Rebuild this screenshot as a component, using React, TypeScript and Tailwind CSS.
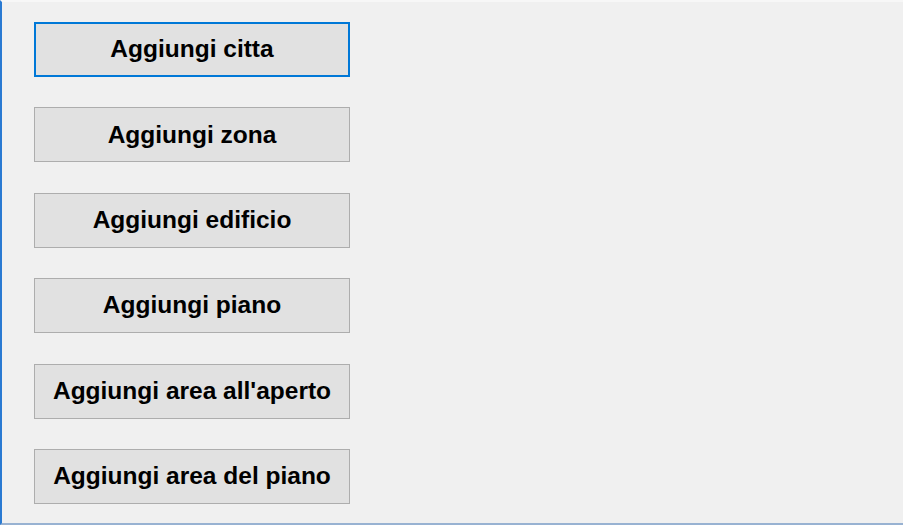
const buttons = [
  'Aggiungi citta',
  'Aggiungi zona',
  'Aggiungi edificio',
  'Aggiungi piano',
  "Aggiungi area all'aperto",
  'Aggiungi area del piano',
];

export default function App() {
  return (
    <div
      className="h-[525px] w-full bg-[#f0f0f0] border-l-2 border-l-[#2a7ad2] border-b-2 border-b-[#98b2d2] border-t-2 border-t-[#f7f7f7] pl-[32px] pt-[20px]"
      style={{ fontFamily: '"Liberation Sans", Arial, sans-serif' }}
    >
      <div className="flex flex-col gap-[30.4px]">
        {buttons.map((label, i) => (
          <button
            key={label}
            className={
              i === 0
                ? 'w-[316px] h-[55px] bg-[#e1e1e1] border-2 border-[#0078d7] text-[24.5px] font-bold text-black flex items-center justify-center'
                : 'w-[316px] h-[55px] bg-[#e1e1e1] border border-[#adadad] text-[24.5px] font-bold text-black flex items-center justify-center'
            }
          >
            {label}
          </button>
        ))}
      </div>
    </div>
  );
}
